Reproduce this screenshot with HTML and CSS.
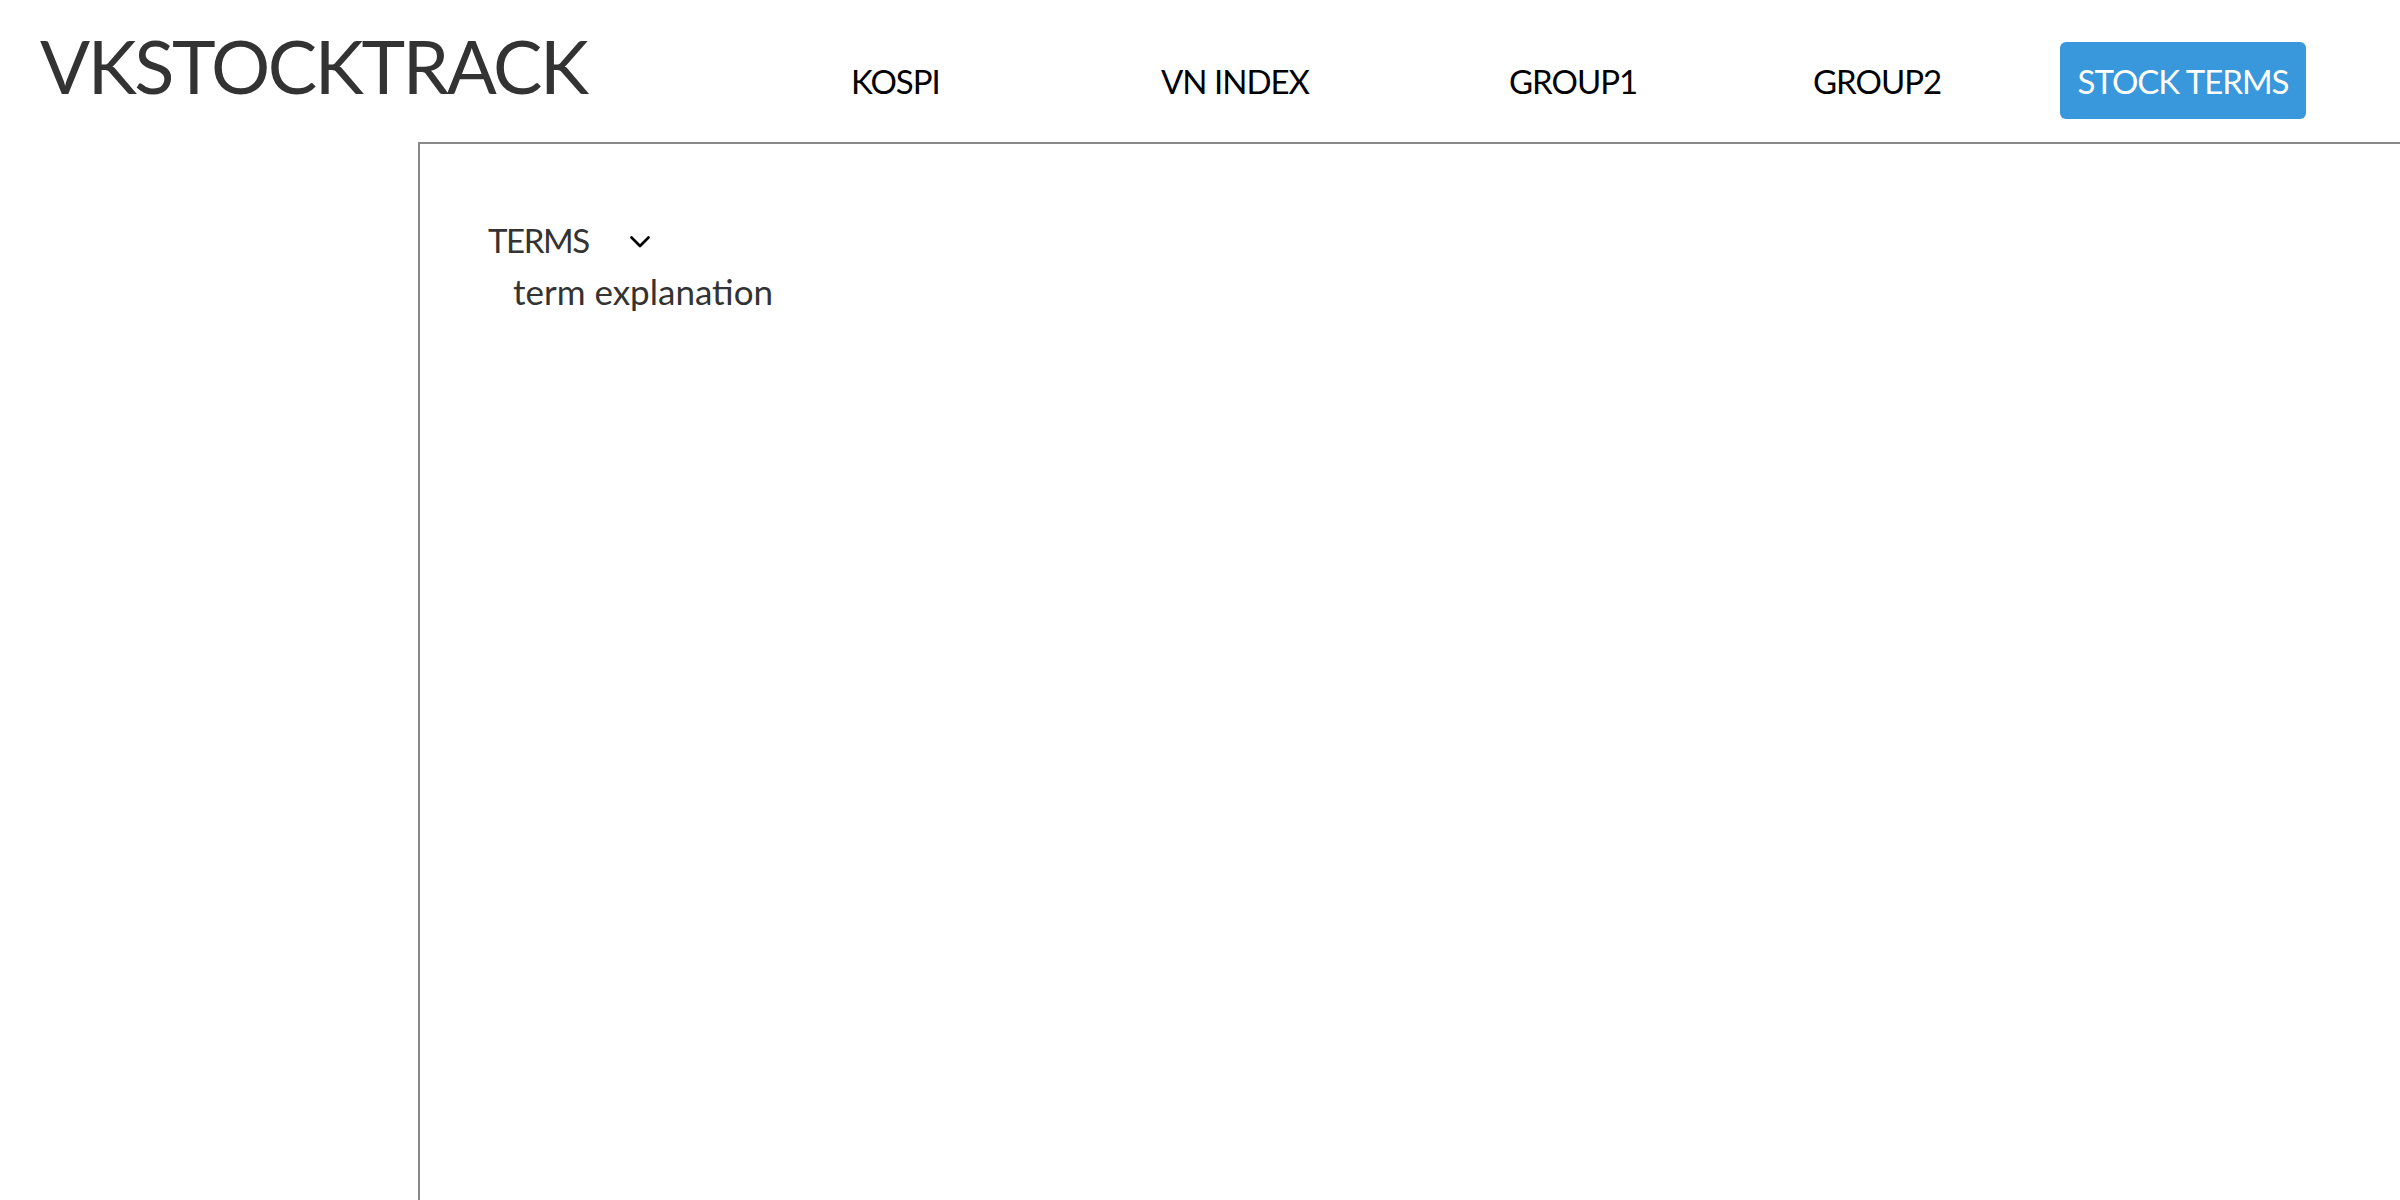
FILE: index.html
```html
<!DOCTYPE html>
<html lang="en">
<head>
<meta charset="utf-8">
<title>VKSTOCKTRACK</title>
<link rel="stylesheet" href="styles.css">
</head>
<body>
<header class="header">
  <div class="logo">VKSTOCKTRACK</div>
  <nav class="nav">
    <a class="nav-link" href="#">KOSPI</a>
    <a class="nav-link" href="#">VN INDEX</a>
    <a class="nav-link" href="#">GROUP1</a>
    <a class="nav-link" href="#">GROUP2</a>
    <a class="nav-link nav-active" href="#">STOCK TERMS</a>
  </nav>
</header>
<main class="main">
  <aside class="sidebar"></aside>
  <section class="content">
    <div class="term-toggle">
      <span class="term-title">TERMS</span>
      <svg class="chevron" width="20" height="12" viewBox="0 0 20 12"><polyline points="1.5,1.5 10,10 18.5,1.5" fill="none" stroke="#000" stroke-width="2.6" stroke-linecap="round" stroke-linejoin="round"/></svg>
    </div>
    <div class="term-body">term explanation</div>
  </section>
</main>
</body>
</html>
```
FILE: styles.css
```css
html, body {
  margin: 0;
  padding: 0;
  background: #fff;
}
body {
  font-family: Lato, "Open Sans", sans-serif;
  color: #333;
}
.header {
  box-sizing: border-box;
  height: 142px;
  padding: 21px 94px 0 40px;
  display: flex;
  align-items: baseline;
  justify-content: space-between;
}
.logo {
  font-size: 74px;
  line-height: normal;
  letter-spacing: -2.4px;
  color: #333;
}
.nav {
  display: grid;
  grid-template-columns: 310px 348px 304px 247px 246px;
  align-items: baseline;
}
.nav-link {
  font-size: 33px;
  line-height: 40px;
  letter-spacing: -1px;
  color: #000;
  text-decoration: none;
  justify-self: start;
}
.nav-active {
  box-sizing: border-box;
  width: 246px;
  text-align: center;
  background: #3898db;
  color: #fff;
  border-radius: 6px;
  padding: 19px 0 18px 0;
}
.main {
  display: flex;
  height: calc(100vh - 142px);
}
.sidebar {
  width: 418px;
  flex: none;
}
.content {
  flex: 1;
  border-top: 2px solid #888;
  border-left: 2px solid #888;
  padding: 76px 0 0 68px;
}
.term-toggle {
  display: flex;
  align-items: center;
  gap: 41px;
  font-size: 33px;
  line-height: normal;
  letter-spacing: -1.4px;
  color: #333;
}
.chevron {
  display: block;
  margin-top: 4px;
}
.term-body {
  font-size: 35px;
  line-height: normal;
  color: #333;
  padding-left: 25px;
  margin-top: 10px;
}
```
